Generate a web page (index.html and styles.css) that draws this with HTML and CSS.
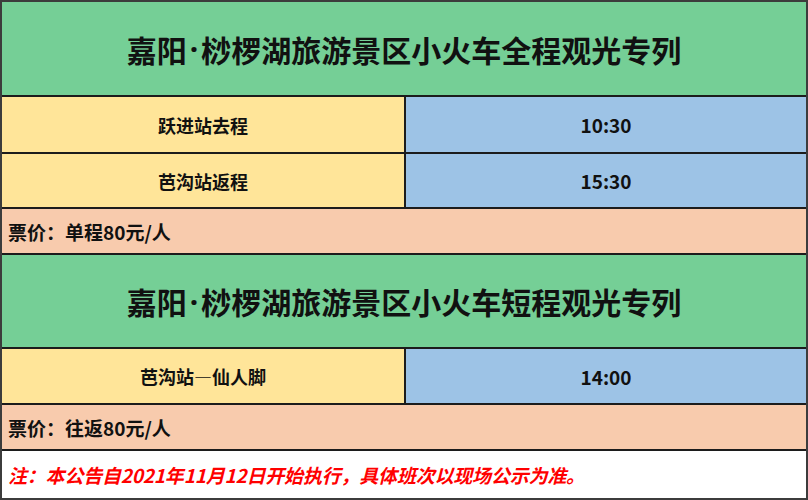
FILE: index.html
```html
<!DOCTYPE html>
<html lang="zh">
<head>
<meta charset="utf-8">
<link rel="stylesheet" href="styles.css">
</head>
<body>
<div class="sheet">
  <div class="row title h1">嘉阳<span class="dot">·</span>桫椤湖旅游景区小火车全程观光专列</div>
  <div class="row pair r1"><div class="cell from">跃进站去程</div><div class="cell time">10:30</div></div>
  <div class="row pair r2"><div class="cell from">芭沟站返程</div><div class="cell time">15:30</div></div>
  <div class="row price p1">票价：单程80元/人</div>
  <div class="row title h2">嘉阳<span class="dot">·</span>桫椤湖旅游景区小火车短程观光专列</div>
  <div class="row pair r3"><div class="cell from">芭沟站—仙人脚</div><div class="cell time">14:00</div></div>
  <div class="row price p2">票价：往返80元/人</div>
  <div class="row note">注：本公告自2021年11月12日开始执行，具体班次以现场公示为准。</div>
</div>
</body>
</html>
```
FILE: styles.css
```css
html, body {
  margin: 0;
  padding: 0;
  background: #ffffff;
}
body {
  font-family: "Noto Sans CJK SC", "Noto Sans", sans-serif;
  font-weight: 700;
  color: #111;
}
.sheet {
  box-sizing: border-box;
  width: 808px;
  height: 500px;
  border: 2px solid #3c3c3c;
  display: flex;
  flex-direction: column;
}
.row {
  box-sizing: border-box;
  border-bottom: 2px solid #1c1c1c;
  display: flex;
  align-items: center;
}
.row:last-child { border-bottom: none; }
.title {
  background: #75cf96;
  justify-content: center;
  font-size: 30px;
  white-space: pre;
}
.dot {
  font-family: "Noto Sans", sans-serif;
  padding: 0 3px;
}
.h1 { height: 95px; }
.h2 { height: 94px; }
.r1 { height: 57px; }
.r2 { height: 55px; }
.r3 { height: 56px; }
.pair { align-items: stretch; }
.cell {
  display: flex;
  align-items: center;
  justify-content: center;
  font-size: 18px;
}
.from {
  width: 402px;
  background: #ffe599;
  border-right: 2px solid #1c1c1c;
}
.time {
  flex: 1;
  background: #9dc3e6;
  font-size: 19px;
}
.price {
  height: 46px;
  background: #f8cbad;
  font-size: 19px;
  padding-left: 6px;
}
.note {
  flex: 1;
  background: #ffffff;
  color: #ff0000;
  font-style: italic;
  font-size: 19px;
  padding-left: 6px;
  letter-spacing: -0.2px;
}
```
